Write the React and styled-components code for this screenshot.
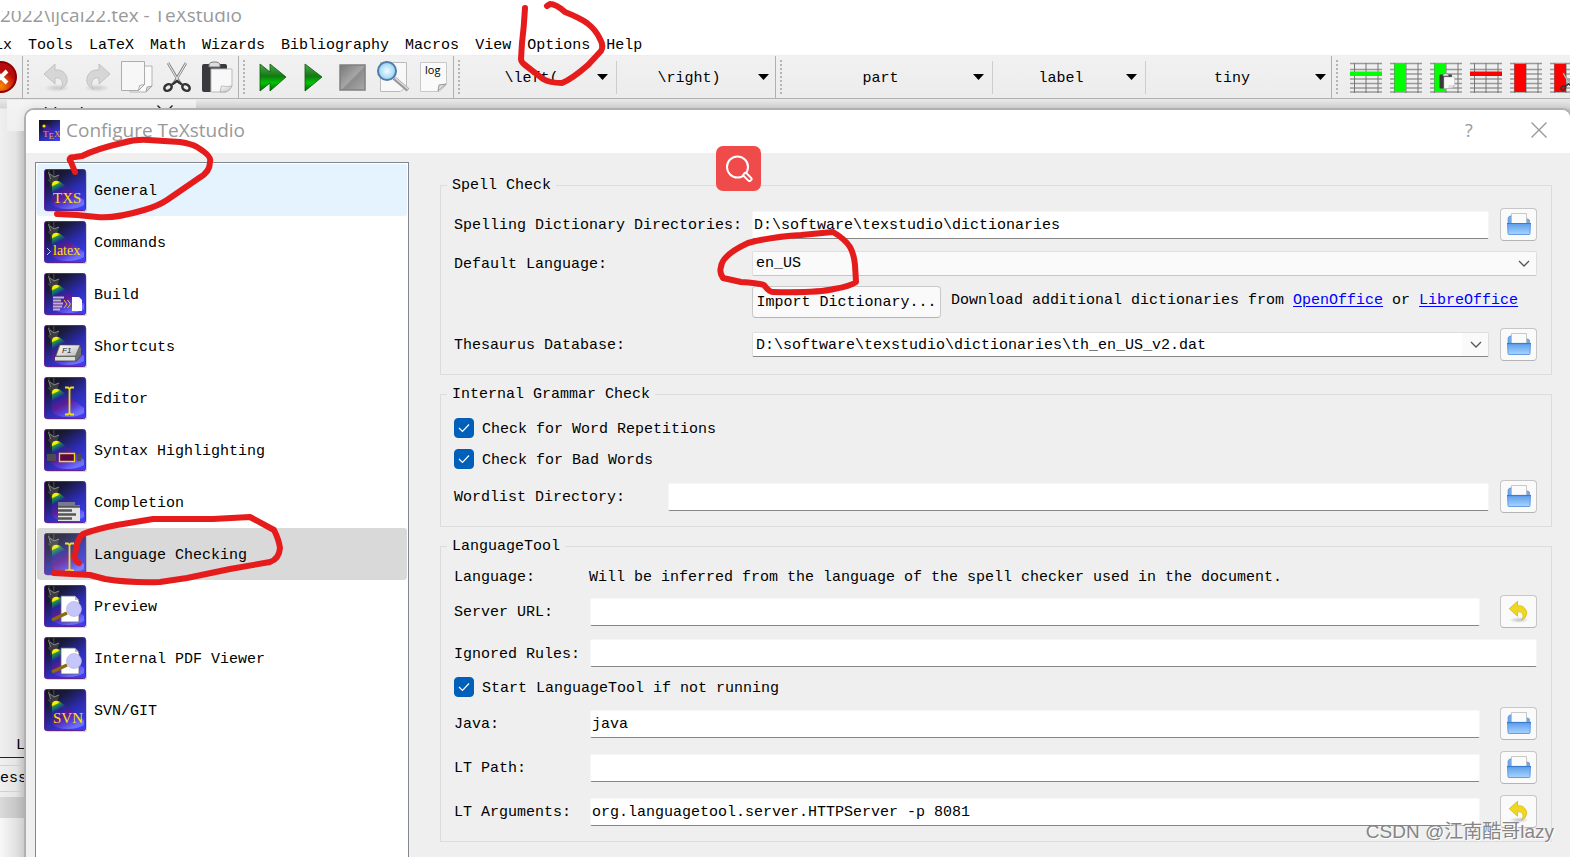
import React from "react";
import styled, { createGlobalStyle } from "styled-components";

const MONO = '"Liberation Mono", "Noto Sans CJK SC", monospace';
const UI = '"Open Sans", "Noto Sans", sans-serif';

const GlobalStyle = createGlobalStyle`
  *, *::before, *::after { box-sizing: border-box; }
  body { margin: 0; background: #fff; font: 15px/20px ${MONO}; color: #000; }
  button, input, select { font: inherit; color: inherit; }
`;

const Page = styled.div`
  position: relative;
  display: flex;
  flex-direction: column;
  min-height: 100vh;
  overflow: hidden;
`;

/* ---------- main window ---------- */

const TitleBar = styled.header`
  padding-top: 11px;
  background: #fff;
`;

const TitleClip = styled.div`
  display: flex;
  align-items: flex-end;
  height: 17px;
  padding-bottom: 1px;
  overflow: hidden;
  font: 19px/24px ${UI};
  color: #999;
  white-space: pre;
`;

const MenuBar = styled.nav`
  display: flex;
  gap: 16px;
  height: 28px;
  padding-top: 7px;
  margin-left: -6px;
  border-bottom: 1px solid #eee;
`;

const MenuItem = styled.button`
  height: 20px;
  padding: 1px 0 0;
  border: 0;
  background: none;
`;

const Toolbar = styled.div`
  display: flex;
  height: 43px;
  border-bottom: 1px solid #b0b0b0;
  background: linear-gradient(#f1f1f1, #ececec);
`;

const Group = styled.div`
  display: flex;
  flex: ${(p) => (p.$grow ? "1 1 0" : "none")};
  align-items: center;
  width: ${(p) => (p.$width ? p.$width + "px" : "auto")};
  gap: ${(p) => p.$gap || 0}px;
  border-right: ${(p) => (p.$grow ? "0" : "1px solid #b0b0b0")};
  overflow: hidden;
`;

const Grip = styled.i`
  flex: none;
  width: 2px;
  height: 34px;
  margin: 0 ${(p) => p.$after}px 0 4px;
  background: repeating-linear-gradient(#b4b4b4 0 2px, transparent 2px 4px);
`;

const ToolButton = styled.button`
  flex: none;
  width: 32px;
  height: 32px;
  padding: 0;
  border: 0;
  background: none;
  svg { display: block; }
`;

const ClippedTool = styled.span`
  display: block;
  margin-left: -15px;
`;

const Picker = styled.div`
  display: grid;
  align-items: center;
  flex: none;
  width: ${(p) => p.$width}px;
  height: 33px;
  border-left: 1px solid ${(p) => (p.$first ? "transparent" : "#cdcdcd")};
  > * { grid-area: 1 / 1; }
  svg { justify-self: end; margin-right: 8px; pointer-events: none; }
`;

const PickerSelect = styled.select`
  appearance: none;
  width: 100%;
  height: 32px;
  padding: 3px 16px 0 0;
  border: 0;
  background: none;
  text-align: center;
  text-align-last: center;
`;

const Workspace = styled.main`
  display: grid;
  flex: 1;
  > * { grid-area: 1 / 1; }
`;

const Backdrop = styled.div`
  display: flex;
  flex-direction: column;
  background: linear-gradient(#eaeaea, #d6d6d6 9px, transparent 10px),
    linear-gradient(90deg, #f0f0f0, #e4e4e4 16px, #cacaca 25px);
`;

const FileTab = styled.div`
  display: flex;
  align-items: flex-start;
  gap: 53px;
  width: 189px;
  height: 31px;
  margin: 1px 0 0 7px;
  padding: 5px 16px 0 34px;
  background: linear-gradient(#f4f4f4, #f0f0f0);
  svg { display: block; flex: none; }
`;

const StatusBlock = styled.div`
  display: flex;
  flex-direction: column;
  margin-top: auto;
`;

const StatusLine = styled.div`
  height: 24px;
  padding: 2px 0 0 16px;
  border-bottom: 1px solid #222;
`;

const MessageTab = styled.div`
  height: 27px;
  margin-top: 7px;
  padding-top: 3px;
  border: solid #d0d0d0;
  border-width: 1px 0;
`;

const MessageBar = styled.div`
  height: 21px;
  margin-top: 5px;
  background: linear-gradient(90deg, #dadada, #bcbcbc 25px);
`;

const MessageArea = styled.div`
  height: 40px;
  background: linear-gradient(90deg, #f8f8f8, #d6d6d6 25px);
`;

/* ---------- dialog ---------- */

const Dialog = styled.section`
  display: flex;
  flex-direction: column;
  margin: 9px -2px -12px 24px;
  border: 2px solid #b0b0b0;
  border-radius: 10px;
  background: #efefef;
  box-shadow: 0 0 10px rgba(0, 0, 0, 0.1);
  overflow: hidden;
`;

const DialogTitle = styled.header`
  display: flex;
  align-items: center;
  height: 43px;
  padding: 0 8px 3px 13px;
  background: #fff;
  h1 { flex: 1; margin: 0 0 0 6px; font: 19px/24px ${UI}; color: #999; }
`;

const WindowButton = styled.button`
  display: grid;
  place-items: center;
  width: 46px;
  height: 32px;
  margin-left: 24px;
  padding: 0;
  border: 0;
  background: none;
  font: 18px/24px ${UI};
  color: #999;
`;

const DialogBody = styled.div`
  display: flex;
  flex: 1;
  gap: 31px;
  padding: 9px 18px 0 9px;
`;

const SectionList = styled.ul`
  flex: none;
  width: 374px;
  margin: 0;
  padding: 1px;
  border: 1px solid #82878f;
  background: #fff;
  list-style: none;
`;

const SectionItem = styled.button`
  display: flex;
  align-items: center;
  gap: 7px;
  width: 100%;
  height: 52px;
  padding: 0 0 0 7px;
  border: 0;
  border-radius: 3px;
  background: ${(p) => (p.$state === "hover" ? "#e5f3ff" : p.$state === "selected" ? "#d9d9d9" : "none")};
  text-align: left;
  svg { flex: none; opacity: ${(p) => (p.$state === "selected" ? 0.85 : 1)}; }
`;

const Caption = styled.span`
  padding-top: 3px;
`;

const Panel = styled.form`
  display: flex;
  flex: 1;
  flex-direction: column;
  gap: 9px;
  min-width: 0;
  margin-top: 13px;
  padding-bottom: 26px;
`;

const Section = styled.fieldset`
  display: flex;
  flex-direction: column;
  gap: ${(p) => p.$gap}px;
  min-width: 0;
  margin: 0;
  padding: ${(p) => p.$top || 13}px 14px 13px 13px;
  border: 1px solid #dcdcdc;
`;

const Legend = styled.legend`
  height: 20px;
  margin-left: -7px;
  padding: 1px 5px 0;
`;

const Row = styled.div`
  display: flex;
  align-items: center;
  height: ${(p) => p.$height || 33}px;
`;

const RowLabel = styled.label`
  flex: none;
  width: ${(p) => p.$width}px;
  padding-top: 3px;
`;

const RowText = styled.span`
  flex: none;
  width: ${(p) => (p.$width ? p.$width + "px" : "auto")};
  padding-top: 3px;
`;

const TextInput = styled.input`
  flex: 1;
  min-width: 0;
  height: 28px;
  padding: 1px 1px 0;
  border: 1px solid #f6f6f6;
  border-bottom-color: #868686;
  border-radius: 2px;
  background: #fff;
`;

const Combo = styled.div`
  display: grid;
  flex: 1;
  align-items: center;
  min-width: 0;
  > * { grid-area: 1 / 1; }
  svg { justify-self: end; margin-right: 7px; pointer-events: none; }
`;

const ComboSelect = styled.select`
  appearance: none;
  width: 100%;
  height: 25px;
  padding: 2px 3px 0;
  border: 1px solid #dedede;
  border-bottom-color: ${(p) => (p.$editable ? "#868686" : "#c6c6c6")};
  border-radius: 2px;
  background: ${(p) => (p.$editable ? "linear-gradient(90deg, #fff calc(100% - 26px), #fafafa calc(100% - 26px))" : "#fafafa")};
`;

const PushButton = styled.button`
  height: 32px;
  width: 189px;
  padding: 2px 0 0;
  border: 1px solid #c8c8c8;
  border-bottom-color: #b4b4b4;
  border-radius: 4px;
  background: #fafafa;
`;

const IconButton = styled.button`
  display: grid;
  flex: none;
  place-items: center;
  width: 37px;
  height: 33px;
  margin-left: ${(p) => p.$gap}px;
  padding: 0 0 2px;
  border: 1px solid #c6c6c6;
  border-bottom-color: #b4b4b4;
  border-radius: 4px;
  background: #fafafa;
`;

const Hint = styled.p`
  flex: 1;
  margin: 0 0 0 10px;
  padding-bottom: 1px;
  white-space: nowrap;
  a { color: #0000ff; text-underline-offset: 2px; }
`;

const CheckLabel = styled.label`
  display: flex;
  align-items: center;
  gap: 8px;
  height: ${(p) => p.$height || 20}px;
`;

const CheckBox = styled.span`
  display: grid;
  place-items: center;
  width: 20px;
  height: 20px;
  > * { grid-area: 1 / 1; }
  input {
    appearance: none;
    width: 20px;
    height: 20px;
    margin: 0;
    border: 1px solid #868686;
    border-radius: 4px;
  }
  input:checked { border-color: #005fb8; background: #005fb8; }
  svg { z-index: 1; pointer-events: none; }
`;

/* ---------- overlays ---------- */

const Ink = styled.svg`
  position: absolute;
  top: 0;
  left: 0;
  pointer-events: none;
`;

const SearchBadge = styled.button`
  position: absolute;
  top: 146px;
  left: 716px;
  display: grid;
  place-items: center;
  width: 45px;
  height: 45px;
  padding: 0;
  border: 0;
  border-radius: 7px;
  background: #ef4b4b;
`;

const Watermark = styled.div`
  position: absolute;
  right: 16px;
  bottom: 13px;
  font: 19px/26px "Liberation Sans", "Noto Sans CJK SC", sans-serif;
  color: #858585;
  text-shadow: 1px 1px 0 #fff;
`;

/* ---------- icons ---------- */

const DownArrow = () => (
  <svg width="11" height="6"><path d="M0 0h11L5.5 6z" fill="#000" /></svg>
);

const Chevron = () => (
  <svg width="12" height="7" fill="none" stroke="#555" strokeWidth="1.3"><path d="M1 1l5 5 5-5" /></svg>
);

const Cross = ({ size, color }) => (
  <svg width={size} height={size} viewBox="0 0 16 16" stroke={color} strokeWidth="1.4"><path d="M.5.5l15 15M15.5.5l-15 15" /></svg>
);

const HiddenSvg = styled.svg`
  position: absolute;
`;

const Defs = () => (
  <HiddenSvg width="0" height="0" aria-hidden="true">
    <defs>
      <linearGradient id="night" x1="0.1" y1="0" x2="0.8" y2="1">
        <stop offset="0" stopColor="#15151c" /><stop offset=".25" stopColor="#1a1a3c" />
        <stop offset=".6" stopColor="#2c2cb0" /><stop offset="1" stopColor="#3d3df2" />
      </linearGradient>
      <linearGradient id="beam" gradientUnits="userSpaceOnUse" x1="11" y1="12" x2="26" y2="40">
        <stop offset="0" stopColor="#d8e800" /><stop offset=".14" stopColor="#1c9a50" />
        <stop offset=".3" stopColor="#26269c" /><stop offset=".55" stopColor="#641a92" />
        <stop offset=".8" stopColor="#5a44e0" /><stop offset="1" stopColor="#7474fc" />
      </linearGradient>
      <linearGradient id="silver" x1="0" y1="0" x2="1" y2="1">
        <stop offset="0" stopColor="#fff" /><stop offset="1" stopColor="#bcbcbc" />
      </linearGradient>
      <linearGradient id="green" x1="0" y1="0" x2="0" y2="1">
        <stop offset="0" stopColor="#4fa64f" /><stop offset=".45" stopColor="#127a12" />
        <stop offset=".7" stopColor="#00c400" /><stop offset="1" stopColor="#0a5a0a" />
      </linearGradient>
      <linearGradient id="steel" x1="0" y1="0" x2="1" y2="1">
        <stop offset="0" stopColor="#777" /><stop offset=".5" stopColor="#a6a6a6" /><stop offset=".55" stopColor="#8c8c8c" /><stop offset="1" stopColor="#aaa" />
      </linearGradient>
      <linearGradient id="sky" x1="0" y1="0" x2="0" y2="1">
        <stop offset="0" stopColor="#5b9eea" /><stop offset="1" stopColor="#a9d3ff" />
      </linearGradient>
      <radialGradient id="lens"><stop offset="0" stopColor="#f2fcff" /><stop offset="1" stopColor="#96d2f4" /></radialGradient>
      <radialGradient id="shade"><stop offset="0" stopColor="#000" stopOpacity=".22" /><stop offset="1" stopColor="#000" stopOpacity="0" /></radialGradient>
      <radialGradient id="alarm" cx=".5" cy=".8"><stop offset="0" stopColor="#ff8800" /><stop offset="1" stopColor="#b80c0c" /></radialGradient>
    </defs>
  </HiddenSvg>
);

const iconText = { fontFamily: '"Liberation Serif", serif', fill: "#ffe000" };

const glyphs = {
  txs: <text x="9" y="34" fontSize="15" {...iconText}>TXS</text>,
  svn: <text x="9" y="34" fontSize="15" {...iconText}>SVN</text>,
  latex: (
    <>
      <path d="M3 27l3.500 3.500L3 34" fill="none" stroke="#ffe000" />
      <text x="9" y="34" fontSize="14" {...iconText}>latex</text>
    </>
  ),
  build: (
    <>
      <path d="M9 24.500h11M9 27.500h8M9 30.500h10M9 33.500h9M9 36.500h7" stroke="#b9b4cc" strokeWidth="2" />
      <path d="M20 27l3 4-3 4M23.500 27l3 4-3 4" fill="none" stroke="#e8c020" />
      <path d="M28 24h7l3 3v11H28z" fill="#fff" />
    </>
  ),
  key: (
    <>
      <path d="M15 20h21l1.500 4v6l-5 6H11v-4z" fill="#707070" stroke="#333" strokeWidth=".6" />
      <path d="M16 20h20l-4.500 11H12z" fill="url(#silver)" stroke="#555" strokeWidth=".6" />
      <path d="M11 32h20v3.500H11z" fill="#ddd" />
      <text x="18" y="28" fontSize="8" fontStyle="italic" fontFamily="Liberation Sans" fill="#222">F1</text>
    </>
  ),
  caret: <path d="M21 10.500h3l1.500 1.500 1.500-1.500h3M25.500 12v24M21 37.500h3l1.500-1.500 1.500 1.500h3" fill="none" stroke="#f5dc10" strokeWidth="1.800" />,
  syntax: (
    <>
      <path d="M3 25h9v7H3zM33 25h4v7h-4z" fill="#4c4c50" />
      <path d="M15.500 24.500h15v8h-15z" fill="#5a0848" stroke="#f0d800" strokeWidth="1.300" />
    </>
  ),
  list: (
    <>
      <path d="M14 21h17v3H14z" fill="#777a90" />
      <path d="M14 24h22v16H14z" fill="#e4e4e4" />
      <path d="M14 25.500h22M14 29.500h14M14 33.500h18M14 37.500h14" stroke="#555" strokeWidth="2.600" />
    </>
  ),
  lens: (
    <>
      <path d="M17 11h14l4 5v21H17z" fill="#fff" stroke="#667" strokeWidth=".8" />
      <path d="M31 11v4h4z" fill="#bbb" />
      <path d="M8 35l15-7" stroke="#8c6a10" strokeWidth="3.500" />
      <circle cx="30" cy="24" r="7.500" fill="#c6c6fb" stroke="#aaaae0" strokeWidth=".6" />
    </>
  ),
};

const SpotIcon = ({ name }) => (
  <svg width="43" height="43" viewBox="0 0 43 43">
    <rect x="2" y="2" width="41" height="41" rx="2" fill="#000" opacity=".16" />
    <rect x=".5" y=".5" width="41" height="41" rx="2" fill="url(#night)" stroke="#5c2496" />
    <path d="M8 15l7-3 25 19v5q-6 4-16 4-13 0-16-6z" fill="url(#beam)" opacity=".9" />
    <path d="M4 1h1.500v3L9 7V1h1.500v6l5-1-2 5 1 3-5 1-3 4v-5l-3-3 3-2z" fill="#3c3c40" />
    <path d="M4.500 3l2 7M6 5l4 3 5-2" fill="none" stroke="#8e8e92" strokeWidth=".9" />
    <path d="M8 15q1-4 6-3l1 2-7 3z" fill="#f2f200" />
    {glyphs[name]}
  </svg>
);

const AppIcon = () => (
  <svg width="21" height="21" viewBox="0 0 21 21">
    <rect width="21" height="21" fill="url(#night)" />
    <path d="M4 6l3-2 12 12H5z" fill="#5a20a0" opacity=".6" />
    <circle cx="5" cy="6" r="1.600" fill="#eaea00" />
    <text x="4" y="17" fontSize="9" {...iconText} fill="#e0b030">T<tspan dy="2">E</tspan><tspan dy="-2">X</tspan></text>
  </svg>
);

const CloseIcon = () => (
  <svg width="32" height="32"><circle cx="16" cy="16" r="15" fill="url(#alarm)" stroke="#8b0000" strokeWidth="2" /><path d="M10 10l12 12M22 10L10 22" stroke="#fff" strokeWidth="4" /></svg>
);

const curve = "M3 13L14 3v6c9-1 13 6 12 12q-1 5-7 7 4-4 2-8-2-4-7-3v6z";

const UndoIcon = ({ flip }) => (
  <svg width="32" height="32" viewBox="0 0 32 32">
    <g transform={flip ? "translate(32 0) scale(-1 1)" : undefined}>
      <ellipse cx="16" cy="27" rx="13" ry="4" fill="url(#shade)" opacity=".7" />
      <path d={curve} fill="#d6d6d6" stroke="#c2c2c2" />
    </g>
  </svg>
);

const ResetIcon = () => (
  <svg width="24" height="24" viewBox="0 0 32 32">
    <ellipse cx="16" cy="28" rx="13" ry="4" fill="url(#shade)" />
    <path d={curve} fill="#f0d820" stroke="#d4b40c" />
  </svg>
);

const CopyIcon = () => (
  <svg width="32" height="32" fill="url(#silver)">
    <path d="M9 5h22v20l-6 6H9z" fill="#fafafa" stroke="#b4b4b4" />
    <path d="M.5.500h23v23l-6 6H.5z" fill="#f7f7f7" stroke="#adadad" />
    <path d="M17.500 29.500l1-5 5-1zM25 31l1-5 5-1z" stroke="#999" strokeWidth=".8" />
  </svg>
);

const CutArt = () => (
  <g fill="none">
    <path d="M7 2l12 20M25 2L13 22" stroke="#888" strokeWidth="2.600" />
    <path d="M7 2l11 19M25 2L14 21" stroke="#eee" strokeWidth="1" />
    <ellipse cx="7" cy="26.500" rx="4" ry="3" stroke="#333" strokeWidth="2.500" transform="rotate(-35 7 26.500)" />
    <ellipse cx="25" cy="26.500" rx="4" ry="3" stroke="#333" strokeWidth="2.500" transform="rotate(35 25 26.500)" />
    <path d="M11 23.500l5-3.500 5 3.500" stroke="#333" strokeWidth="2.500" />
  </g>
);

const CutIcon = () => <svg width="32" height="32"><CutArt /></svg>;

const PasteArt = () => (
  <g>
    <rect x="1" y="3" width="25" height="28" rx="2" fill="#3a3a3e" />
    <path d="M8 4q0-3 5.500-3T19 4v2H8z" fill="#ddd" stroke="#777" />
    <path d="M10 8h21v17l-6 6H10z" fill="#f8f8f8" stroke="#bbb" />
    <path d="M19 31l1.500-6q5 1 10.500 0-2 5-6 6z" fill="url(#silver)" stroke="#999" strokeWidth=".6" />
  </g>
);

const PasteIcon = () => <svg width="32" height="32"><PasteArt /></svg>;

const RunIcon = ({ double }) => (
  <svg width="32" height="32" fill="url(#green)" stroke="#0b5a0b" strokeWidth=".8">
    {double ? <path d="M3 3l10 8V3l16 13-16 14v-8L3 30z" /> : <path d="M8 3l17 13L8 30z" />}
  </svg>
);

const HaltIcon = () => (
  <svg width="32" height="32"><rect x="3" y="4" width="25" height="25" fill="url(#steel)" stroke="#808080" strokeWidth="1.500" /></svg>
);

const ViewIcon = () => (
  <svg width="32" height="32">
    <path d="M3.500 1.500h26v24l-6 5h-20z" fill="#f8f8f8" stroke="#bbb" />
    <path d="M17 17l14 12" stroke="#999" strokeWidth="4" /><path d="M17 16l14 12" stroke="#ddd" strokeWidth="1.500" />
    <circle cx="10" cy="10" r="9" fill="url(#lens)" stroke="#4f7ba8" strokeWidth="2" />
  </svg>
);

const LogIcon = () => (
  <svg width="32" height="32">
    <path d="M3.500 1.500h26v22l-7 7h-19z" fill="#fafafa" stroke="#c8c8c8" />
    <path d="M21 30l1-6 7-1z" fill="#ddd" stroke="#999" />
    <text x="8" y="13" fontSize="11" fontFamily="Open Sans" fill="#000">log</text>
  </svg>
);

const TableIcon = ({ mode, color, extra }) => (
  <svg width="32" height="32">
    <path d="M0 2.500h32M0 8.500h32M0 13h32M0 18h32M0 22.500h32M0 27h32M0 31h32" stroke="#999" strokeWidth="1.300" />
    <path d="M4.500 2v30M16 2v30M28 2v30" stroke="#777" />
    {mode === "row" ? <path d="M0 10.500h32V15H0z" fill={color} /> : <path d="M4.500 3H16v28H4.500z" fill={color} />}
    {extra === "paste" && <g transform="translate(9 12) scale(.5)"><PasteArt /></g>}
    {extra === "cut" && <g transform="translate(9 11) scale(.6)"><CutArt /></g>}
  </svg>
);

const FolderIcon = () => (
  <svg width="24" height="22">
    <path d="M1 12V5l1.500-2H5l3 3h13l1.500 1v5z" fill="#72a9e8" stroke="#4a88d4" strokeWidth=".6" />
    <path d="M4.500.500h15V12h-15z" fill="#fbfbfb" stroke="#bbb" strokeWidth=".8" />
    <path d="M.5 10.500h23l-.5 10q0 1-1 1H2q-1 0-1-1z" fill="url(#sky)" stroke="#4b8bdc" strokeWidth=".8" />
    <path d="M0 10.500h24" stroke="#3b7cd0" strokeWidth="1.200" />
  </svg>
);

const Tick = () => (
  <svg width="12" height="10" fill="none" stroke="#fff" strokeWidth="1.200"><path d="M1 5l3.500 3.500L11 1.500" /></svg>
);

const SearchIcon = () => (
  <svg width="28" height="28" fill="none" stroke="#fff">
    <circle cx="12.500" cy="12" r="10.500" strokeWidth="2" />
    <path d="M20.500 20l4 4" strokeWidth="6" strokeLinecap="round" />
    <path d="M20.500 20l4 4" stroke="#ef4b4b" strokeWidth="2" strokeLinecap="round" />
  </svg>
);

/* ---------- composed parts ---------- */

const Tool = ({ label, children }) => (
  <ToolButton type="button" aria-label={label}>{children}</ToolButton>
);

const ToolPicker = ({ value, width, first }) => (
  <Picker $width={width} $first={first}>
    <PickerSelect aria-label={value} defaultValue={value}><option>{value}</option></PickerSelect>
    <DownArrow />
  </Picker>
);

const Browse = ({ gap = 11 }) => (
  <IconButton type="button" aria-label="Browse" $gap={gap}><FolderIcon /></IconButton>
);

const Reset = () => (
  <IconButton type="button" aria-label="Reset" $gap={20}><ResetIcon /></IconButton>
);

const Check = ({ height, children }) => (
  <CheckLabel $height={height}>
    <CheckBox><input type="checkbox" defaultChecked /><Tick /></CheckBox>
    <Caption>{children}</Caption>
  </CheckLabel>
);

const Field = ({ id, label, width, value = "", height, children }) => (
  <Row $height={height}>
    <RowLabel htmlFor={id} $width={width}>{label}</RowLabel>
    <TextInput id={id} defaultValue={value} />
    {children}
  </Row>
);

const menus = ["ix", "Tools", "LaTeX", "Math", "Wizards", "Bibliography", "Macros", "View", "Options", "Help"];

const sections = [
  ["General", "txs", "hover"],
  ["Commands", "latex"],
  ["Build", "build"],
  ["Shortcuts", "key"],
  ["Editor", "caret"],
  ["Syntax Highlighting", "syntax"],
  ["Completion", "list"],
  ["Language Checking", "caret", "selected"],
  ["Preview", "lens"],
  ["Internal PDF Viewer", "lens"],
  ["SVN/GIT", "svn"],
];

const strokes = [
  "M525 8Q524 27 522 43L521 59Q521 62 525 65L543 79Q550 83 562 83Q572 79 588 65L601 51Q604 46 600 39Q596 30 587 23Q580 18 565 12Q556 4 550 4L547 6",
  "M75 172L71 162Q67 157 75 157L82 156Q96 149 122 143Q136 139 148 140L180 142Q192 144 197 147Q212 156 210 162Q210 172 199 178L167 200Q158 206 144 210Q114 219 97 217L77 215L57 214",
  "M79 563Q74 560 75 555Q77 538 83 534Q96 529 117 525L153 519L213 519L250 517L274 530Q279 540 280 548Q279 559 270 562L230 569L187 578L160 582Q130 583 105 579L90 575L54 573",
  "M723 278Q719 272 721 267Q722 255 748 243Q770 237 801 235L833 232Q845 239 850 247Q854 254 855 265L856 282Q851 286 834 289Q818 293 773 292Q769 292 764 285Q758 283 741 282Z",
];

export default function App() {
  return (
    <Page>
      <GlobalStyle />
      <Defs />
      <TitleBar><TitleClip>2022\ijcai22.tex - TeXstudio</TitleClip></TitleBar>
      <MenuBar>{menus.map((m) => <MenuItem key={m} type="button">{m}</MenuItem>)}</MenuBar>
      <Toolbar>
        <Group $width={23}>
          <Tool label="Close"><ClippedTool><CloseIcon /></ClippedTool></Tool>
        </Group>
        <Group $width={216} $gap={8}>
          <Grip $after={4} />
          <Tool label="Undo"><UndoIcon /></Tool>
          <Tool label="Redo"><UndoIcon flip /></Tool>
          <Tool label="Copy"><CopyIcon /></Tool>
          <Tool label="Cut"><CutIcon /></Tool>
          <Tool label="Paste"><PasteIcon /></Tool>
        </Group>
        <Group $width={215} $gap={8}>
          <Grip $after={4} />
          <Tool label="Build and view"><RunIcon double /></Tool>
          <Tool label="Compile"><RunIcon /></Tool>
          <Tool label="Stop"><HaltIcon /></Tool>
          <Tool label="View"><ViewIcon /></Tool>
          <Tool label="View log"><LogIcon /></Tool>
        </Group>
        <Group $width={322}>
          <Grip $after={2} />
          <ToolPicker value="\left(" width={154} first />
          <ToolPicker value="\right)" width={161} />
        </Group>
        <Group $width={556}>
          <Grip $after={2} />
          <ToolPicker value="part" width={208} first />
          <ToolPicker value="label" width={153} />
          <ToolPicker value="tiny" width={189} />
        </Group>
        <Group $grow $gap={8}>
          <Grip $after={4} />
          <Tool label="Add row"><TableIcon mode="row" color="#0f0" /></Tool>
          <Tool label="Add column"><TableIcon color="#0f0" /></Tool>
          <Tool label="Paste column"><TableIcon color="#0f0" extra="paste" /></Tool>
          <Tool label="Remove row"><TableIcon mode="row" color="#f00" /></Tool>
          <Tool label="Remove column"><TableIcon color="#f00" /></Tool>
          <Tool label="Cut column"><TableIcon color="#f00" extra="cut" /></Tool>
        </Group>
      </Toolbar>

      <Workspace>
        <Backdrop>
          <FileTab>ijcai22<Cross size={16} color="#222" /></FileTab>
          <StatusBlock>
            <StatusLine>L</StatusLine>
            <MessageTab>ess</MessageTab>
            <MessageBar />
            <MessageArea />
          </StatusBlock>
        </Backdrop>

        <Dialog aria-label="Configure TeXstudio">
          <DialogTitle>
            <AppIcon />
            <h1>Configure TeXstudio</h1>
            <WindowButton type="button">?</WindowButton>
            <WindowButton type="button" aria-label="Close"><Cross size={16} color="#999" /></WindowButton>
          </DialogTitle>
          <DialogBody>
            <SectionList>
              {sections.map(([label, icon, state]) => (
                <li key={label}>
                  <SectionItem type="button" $state={state}><SpotIcon name={icon} /><Caption>{label}</Caption></SectionItem>
                </li>
              ))}
            </SectionList>
            <Panel>
              <Section $gap={10}>
                <Legend>Spell Check</Legend>
                <Field id="dirs" label="Spelling Dictionary Directories:" width={298} value="D:\software\texstudio\dictionaries"><Browse /></Field>
                <Row $height={24}>
                  <RowLabel htmlFor="lang" $width={298}>Default Language:</RowLabel>
                  <Combo>
                    <ComboSelect id="lang"><option>en_US</option></ComboSelect>
                    <Chevron />
                  </Combo>
                </Row>
                <Row>
                  <RowText $width={298} />
                  <PushButton type="button">Import Dictionary...</PushButton>
                  <Hint>Download additional dictionaries from <a href="#openoffice">OpenOffice</a> or <a href="#libreoffice">LibreOffice</a></Hint>
                </Row>
                <Row>
                  <RowLabel htmlFor="thesaurus" $width={298}>Thesaurus Database:</RowLabel>
                  <Combo>
                    <ComboSelect id="thesaurus" $editable><option>D:\software\texstudio\dictionaries\th_en_US_v2.dat</option></ComboSelect>
                    <Chevron />
                  </Combo>
                  <Browse />
                </Row>
              </Section>

              <Section $gap={11} $top={14}>
                <Legend>Internal Grammar Check</Legend>
                <Check>Check for Word Repetitions</Check>
                <Check>Check for Bad Words</Check>
                <Field id="words" label="Wordlist Directory:" width={214}><Browse /></Field>
              </Section>

              <Section $gap={11}>
                <Legend>LanguageTool</Legend>
                <Row $height={15}>
                  <RowText $width={135}>Language:</RowText>
                  <RowText>Will be inferred from the language of the spell checker used in the document.</RowText>
                </Row>
                <Field id="server" label="Server URL:" width={136}><Reset /></Field>
                <Field id="rules" label="Ignored Rules:" width={136} height={28} />
                <Check height={18}>Start LanguageTool if not running</Check>
                <Field id="java" label="Java:" width={136} value="java"><Browse gap={20} /></Field>
                <Field id="ltpath" label="LT Path:" width={136}><Browse gap={20} /></Field>
                <Field id="ltargs" label="LT Arguments:" width={136} value="org.languagetool.server.HTTPServer -p 8081"><Reset /></Field>
              </Section>
            </Panel>
          </DialogBody>
        </Dialog>
      </Workspace>

      <SearchBadge type="button" aria-label="Search"><SearchIcon /></SearchBadge>
      <Ink width="900" height="600" fill="none" stroke="#e61c1c" strokeWidth="6" strokeLinecap="round" strokeLinejoin="round">
        {strokes.map((d) => <path key={d} d={d} />)}
      </Ink>
      <Watermark>CSDN @江南酷哥lazy</Watermark>
    </Page>
  );
}
